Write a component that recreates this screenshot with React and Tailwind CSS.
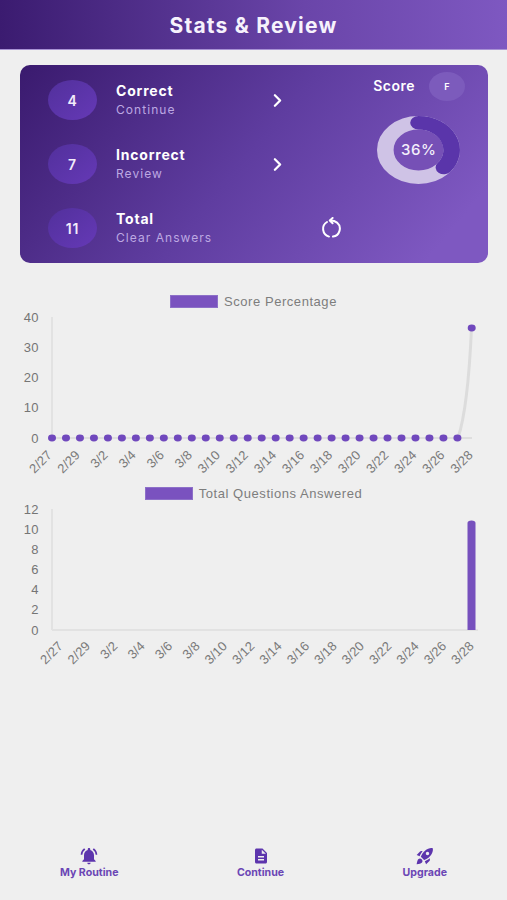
import React from "react";
import { ChevronRight } from "lucide-react";
import { MdNotificationsActive, MdDescription, MdRocketLaunch } from "react-icons/md";

const LABELS = ["2/27","2/29","3/2","3/4","3/6","3/8","3/10","3/12","3/14","3/16","3/18","3/20","3/22","3/24","3/26","3/28"];

function Legend({ label }) {
  return (
    <div className="flex items-center justify-center gap-[6px] h-[14px]">
      <div className="w-[48px] h-[13px] bg-[#7a52bf] border border-[#8d70c8]" />
      <span className="font-['Liberation_Sans',sans-serif] text-[13px] tracking-[0.55px] text-[#7d7d7d] leading-none">{label}</span>
    </div>
  );
}

function StatRow({ n, title, sub, children }) {
  return (
    <div className="flex items-center h-[40px]">
      <div className="w-[49px] h-[40px] rounded-[50%] bg-gradient-to-br from-[#52309c] to-[#6539b6] flex items-center justify-center text-[#f2ecfb] text-[14px] font-semibold tracking-[0.8px]">{n}</div>
      <div className="ml-[19px] w-[156px]">
        <div className="text-white text-[14px] font-bold leading-[18px] tracking-[0.8px]">{title}</div>
        <div className="mt-[1px] text-[#bda8e2] text-[12px] leading-[18px] tracking-[1.05px]">{sub}</div>
      </div>
      {children}
    </div>
  );
}

function Chart1() {
  const ys = [[40,317],[30,347.2],[20,377.5],[10,407.7],[0,438]];
  return (
    <svg viewBox="0 0 507 170" className="block w-[507px] h-[170px] font-['Liberation_Sans',sans-serif]">
      <g transform="translate(0,-310)">
        <line x1="52" y1="317" x2="52" y2="438" stroke="#e2e2e2" strokeWidth="2" />
        <line x1="52" y1="438" x2="472" y2="438" stroke="#dedede" strokeWidth="2" />
        <path d="M458 438 C464 420 469 385 471.5 328" fill="none" stroke="#dcdcdc" strokeWidth="3" />
        {ys.map(([v, y]) => (
          <text key={v} x="39" y={y + 4.5} textAnchor="end" fontSize="13" letterSpacing="0.4" fill="#757575">{v}</text>
        ))}
        {Array.from({ length: 30 }, (_, i) => (
          <ellipse key={i} cx={52 + i * 13.98} cy="438" rx="4" ry="3.4" fill="#7048bd" />
        ))}
        <ellipse cx="471.7" cy="328" rx="4" ry="3.4" fill="#7048bd" />
        {LABELS.map((l, i) => (
          <text key={l} transform={`translate(${52.5 + i * 28.07},456) rotate(-45)`} textAnchor="end" fontSize="13" fill="#7a7a7a">{l}</text>
        ))}
      </g>
    </svg>
  );
}

function Chart2() {
  const ys = [[12,509],[10,529.2],[8,549.3],[6,569.5],[4,589.7],[2,609.8],[0,630]];
  return (
    <svg viewBox="0 0 507 180" className="block w-[507px] h-[180px] font-['Liberation_Sans',sans-serif]">
      <g transform="translate(0,-500)">
        <line x1="52" y1="509" x2="52" y2="630" stroke="#e2e2e2" strokeWidth="2" />
        <line x1="52" y1="630" x2="478" y2="630" stroke="#e2e2e2" strokeWidth="2" />
        {ys.map(([v, y]) => (
          <text key={v} x="39" y={y + 4.5} textAnchor="end" fontSize="13" letterSpacing="0.4" fill="#757575">{v}</text>
        ))}
        <path d="M467.5 630 V523 Q467.5 520.5 471.5 520.5 Q475.5 520.5 475.5 523 V630 Z" fill="#7650bd" />
        {LABELS.map((l, i) => (
          <text key={l} transform={`translate(${63.5 + i * 27.4},647) rotate(-45)`} textAnchor="end" fontSize="13" fill="#7a7a7a">{l}</text>
        ))}
      </g>
    </svg>
  );
}

function NavItem({ icon, label }) {
  return (
    <div className="flex flex-col items-center">
      <div className="h-[17px] flex items-center justify-center text-[#5d35ad]">{icon}</div>
      <span className="mt-[2px] text-[10.6px] leading-[14px] font-bold text-[#6b46b5]">{label}</span>
    </div>
  );
}

export default function App() {
  return (
    <div className="w-[507px] h-[900px] bg-[#efefef] flex flex-col overflow-hidden font-['Inter',sans-serif]">
      <header className="h-[50px] shrink-0 flex items-center justify-center pt-[3px] bg-gradient-to-r from-[#3b1b70] via-[#6a45a9] via-60% to-[#7e58c1] border-b border-[#a892d4]">
        <h1 className="text-[#f6f2fc] text-[21px] font-bold tracking-[1.2px]">Stats &amp; Review</h1>
      </header>

      <section className="ml-[20px] mr-[19px] mt-[15px] h-[198px] shrink-0 rounded-[10px] bg-[linear-gradient(130deg,#3a1a6e_0%,#5f3da0_48%,#7e58c1_90%)] flex pl-[28px] pt-[15px] pr-[23px]">
        <div className="flex flex-col gap-[24px]">
          <StatRow n="4" title="Correct" sub="Continue">
            <ChevronRight size={21} strokeWidth={2.6} className="text-white -ml-[5px]" />
          </StatRow>
          <StatRow n="7" title="Incorrect" sub="Review">
            <ChevronRight size={21} strokeWidth={2.6} className="text-white -ml-[5px]" />
          </StatRow>
          <StatRow n="11" title="Total" sub="Clear Answers">
            <svg viewBox="0 0 22 22" className="w-[22px] h-[22px] ml-[48px] text-white" fill="none" stroke="currentColor" strokeWidth="2" strokeLinecap="round" strokeLinejoin="round">
              <path d="M7 5 A8 8 0 0 0 9 19.6" />
              <path d="M13 19.6 A8 8 0 0 0 17 5.6 Q14.5 3.6 10.5 3.6" />
              <path d="M12.6 1 L9.8 3.6 L12.6 6.2" />
            </svg>
          </StatRow>
        </div>
        <div className="ml-auto -mt-[8px] flex flex-col">
          <div className="flex items-center h-[29px]">
            <span className="text-white text-[14px] font-semibold tracking-[0.5px] -mt-[2px]">Score</span>
            <div className="ml-[14px] w-[36px] h-[29px] rounded-[50%] bg-[#7c5bbc] flex items-center justify-center text-white text-[9px] font-semibold">F</div>
          </div>
          <div className="relative mt-[15px] ml-[4px] w-[83px] h-[68px]">
            <svg viewBox="0 0 100 100" preserveAspectRatio="none" className="block w-[83px] h-[68px]">
              <circle cx="50" cy="50" r="40" fill="#7650b6" stroke="#cfc3e6" strokeWidth="20" />
              <path d="M 50 10 A 40 40 0 0 1 80.6 75.7" fill="none" stroke="#5a35aa" strokeWidth="20" strokeLinecap="round" />
            </svg>
            <span className="absolute inset-0 flex items-center justify-center text-[#f3eefb] text-[15px] font-medium tracking-[0.6px]">36%</span>
          </div>
        </div>
      </section>

      <div className="mt-[31px]"><Legend label="Score Percentage" /></div>
      <div className="mt-[2px]"><Chart1 /></div>
      <div className="mt-[6px]"><Legend label="Total Questions Answered" /></div>
      <Chart2 />

      <nav className="mt-auto mb-[20px] flex justify-between px-[60px]">
        <NavItem label="My Routine" icon={<MdNotificationsActive size={20} />} />
        <NavItem label="Continue" icon={<MdDescription size={18} />} />
        <NavItem label="Upgrade" icon={<MdRocketLaunch size={20} />} />
      </nav>
    </div>
  );
}
